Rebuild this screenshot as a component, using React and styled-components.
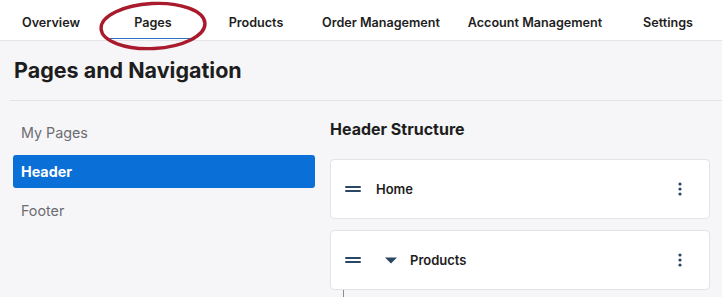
import styled, { createGlobalStyle } from "styled-components";

const GlobalStyle = createGlobalStyle`
	html, body {
		margin: 0;
		padding: 0;
		background: #f6f6f8;
		font-family: Inter, "Noto Sans", sans-serif;
		overflow: hidden;
	}
`;

const tabs = [
	{ label: "Overview", width: 102 },
	{ label: "Pages", width: 102, active: true },
	{ label: "Products", width: 104 },
	{ label: "Order Management", width: 146 },
	{ label: "Account Management", width: 162 },
	{ label: "Settings", width: 104 },
];

const DragHandle = () => (
	<svg width="16" height="6" viewBox="0 0 16 6">
		<rect x="0" y="0" width="16" height="2" rx="1" fill="#2b4662" />
		<rect x="0" y="4" width="16" height="2" rx="1" fill="#2b4662" />
	</svg>
);

const Kebab = () => (
	<svg width="4" height="14" viewBox="0 0 4 14">
		<circle cx="2" cy="2" r="1.6" fill="#2b4662" />
		<circle cx="2" cy="7" r="1.6" fill="#2b4662" />
		<circle cx="2" cy="12" r="1.6" fill="#2b4662" />
	</svg>
);

const Caret = () => (
	<svg width="12" height="7" viewBox="0 0 12 7">
		<path d="M0 0.5 L12 0.5 L6 6.5 Z" fill="#2b4662" />
	</svg>
);

const App = () => {
	return (
		<Page>
			<GlobalStyle />
			<TabBar>
				{tabs.map((t) => (
					<Tab key={t.label} $width={t.width} $active={t.active}>
						{t.label}
						{t.active && (
							<Circle width="112" height="52" viewBox="0 0 112 52">
								<ellipse
									cx="56"
									cy="26"
									rx="52"
									ry="22.5"
									transform="rotate(-3 56 26)"
									fill="none"
									stroke="#a81a2c"
									strokeWidth="3.4"
								/>
							</Circle>
						)}
					</Tab>
				))}
			</TabBar>
			<PageHeader>
				<Title>Pages and Navigation</Title>
			</PageHeader>
			<Main>
				<Sidebar>
					<SideItem>My Pages</SideItem>
					<SideItem $selected>Header</SideItem>
					<SideItem>Footer</SideItem>
				</Sidebar>
				<Structure>
					<SectionTitle>Header Structure</SectionTitle>
					<Card>
						<DragHandle />
						<ItemLabel>Home</ItemLabel>
						<Menu>
							<Kebab />
						</Menu>
					</Card>
					<Card>
						<DragHandle />
						<Toggle>
							<Caret />
						</Toggle>
						<ItemLabel $tight>Products</ItemLabel>
						<Menu>
							<Kebab />
						</Menu>
					</Card>
					<Children />
				</Structure>
			</Main>
		</Page>
	);
};

export default App;

const Page = styled.div`
	width: 722px;
	height: 297px;
	overflow: hidden;
	background: #f6f6f8;
`;

const TabBar = styled.nav`
	display: flex;
	height: 40px;
	background: #ffffff;
	border-bottom: 1px solid #e5e5e8;
`;

const Tab = styled.div`
	position: relative;
	width: ${(p) => p.$width}px;
	flex-shrink: 0;
	display: flex;
	align-items: center;
	justify-content: center;
	padding-top: 4px;
	box-sizing: border-box;
	font-size: 12.6px;
	font-weight: 600;
	color: #1e1e22;

	${(p) =>
		p.$active &&
		`
		&::after {
			content: "";
			position: absolute;
			left: 8px;
			right: 9px;
			bottom: 1px;
			height: 1px;
			background: #2f6fc2;
		}
	`}
`;

const Circle = styled.svg`
	position: absolute;
	left: -5px;
	top: 0;
	z-index: 2;
	overflow: visible;
`;

const PageHeader = styled.div`
	margin-left: 10px;
	padding: 16px 0 17px 4px;
	border-bottom: 1px solid #e3e3e6;
`;

const Title = styled.h1`
	margin: 0;
	font-size: 21.5px;
	line-height: 26px;
	font-weight: 700;
	color: #1d1d20;
`;

const Main = styled.div`
	display: grid;
	grid-template-columns: 302px 380px;
	column-gap: 15px;
	padding: 14px 0 0 13px;
`;

const Sidebar = styled.div`
	display: flex;
	flex-direction: column;
	gap: 6px;
	padding-top: 1px;
`;

const SideItem = styled.div`
	height: 33px;
	display: flex;
	align-items: center;
	padding-left: 8px;
	border-radius: 3px;
	font-size: 14.3px;
	font-weight: ${(p) => (p.$selected ? 700 : 400)};
	color: ${(p) => (p.$selected ? "#ffffff" : "#6c6c72")};
	background: ${(p) => (p.$selected ? "#0a6fd6" : "transparent")};
`;

const Structure = styled.div`
	display: flex;
	flex-direction: column;
	gap: 11px;
`;

const SectionTitle = styled.h2`
	margin: 4px 0 9px 0;
	font-size: 16px;
	line-height: 20px;
	font-weight: 700;
	color: #1d1d20;
`;

const Card = styled.div`
	height: 60px;
	box-sizing: border-box;
	display: flex;
	align-items: center;
	padding: 0 27px 0 14px;
	background: #ffffff;
	border: 1px solid #e3e3e6;
	border-radius: 4px;
`;

const Toggle = styled.span`
	display: flex;
	margin-left: 24px;
`;

const ItemLabel = styled.span`
	margin-left: ${(p) => (p.$tight ? 13 : 15)}px;
	font-size: 13px;
	font-weight: 600;
	color: #1e1e22;
`;

const Menu = styled.span`
	display: flex;
	margin-left: auto;
`;

const Children = styled.div`
	margin: -11px 0 0 13px;
	height: 20px;
	border-left: 1px solid #8a8a90;
`;
